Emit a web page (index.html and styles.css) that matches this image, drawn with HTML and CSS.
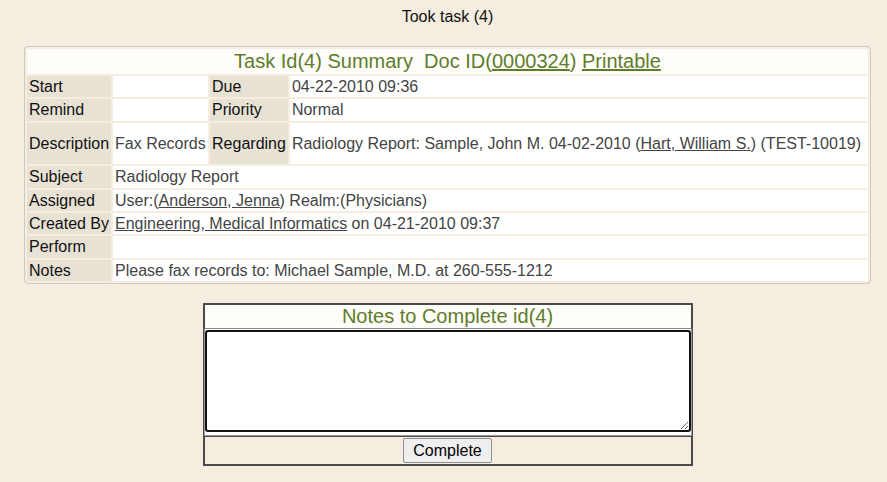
FILE: index.html
```html
<!DOCTYPE html>
<html lang="en">
<head>
    <meta charset="UTF-8">
    <title>Took task (4)</title>
    <link rel="stylesheet" href="styles.css">
</head>
<body>
    <div class="page-title">Took task (4)</div>

    <table class="summary">
        <colgroup>
            <col class="col-label">
            <col class="col-short">
            <col class="col-label2">
            <col>
        </colgroup>
        <tr>
            <th colspan="4" class="summary-head">Task Id(4) Summary &nbsp;Doc ID(<a href="#">0000324</a>) <a href="#">Printable</a></th>
        </tr>
        <tr>
            <td class="label">Start</td>
            <td class="value"></td>
            <td class="label">Due</td>
            <td class="value">04-22-2010 09:36</td>
        </tr>
        <tr>
            <td class="label">Remind</td>
            <td class="value"></td>
            <td class="label">Priority</td>
            <td class="value">Normal</td>
        </tr>
        <tr class="tall">
            <td class="label">Description</td>
            <td class="value">Fax Records</td>
            <td class="label">Regarding</td>
            <td class="value">Radiology Report: Sample, John M. 04-02-2010 (<a href="#">Hart, William S.</a>) (TEST-10019)</td>
        </tr>
        <tr>
            <td class="label">Subject</td>
            <td class="value" colspan="3">Radiology Report</td>
        </tr>
        <tr>
            <td class="label">Assigned</td>
            <td class="value" colspan="3">User:(<a href="#">Anderson, Jenna</a>) Realm:(Physicians)</td>
        </tr>
        <tr>
            <td class="label">Created By</td>
            <td class="value" colspan="3"><a href="#">Engineering, Medical Informatics</a> on 04-21-2010 09:37</td>
        </tr>
        <tr>
            <td class="label">Perform</td>
            <td class="value" colspan="3"></td>
        </tr>
        <tr>
            <td class="label">Notes</td>
            <td class="value" colspan="3">Please fax records to: Michael Sample, M.D. at 260-555-1212</td>
        </tr>
    </table>

    <div class="complete-box">
        <div class="complete-head">Notes to Complete id(4)</div>
        <div class="complete-body">
            <textarea id="notes"></textarea>
        </div>
        <div class="complete-foot">
            <button id="complete-btn">Complete</button>
        </div>
    </div>
</body>
</html>
```

FILE: styles.css
```css
/* page */
body {
    font-family: "Liberation Sans", Arial, sans-serif;
    font-size: 16px;
    background-color: #f4ede0;
    margin: 8px 0 0 8px;
    color: #111;
}

.page-title {
    text-align: center;
    margin-bottom: 20px;
}

/* task summary table */
.summary {
    width: 847px;
    margin: 0 auto;
    border: 1px solid #cdcac4;
    border-radius: 4px;
    border-spacing: 2px;
}

.col-label {
    width: 83px;
}

.col-short {
    width: 95px;
}

.col-label2 {
    width: 77px;
}

.summary td {
    padding: 1px 2px;
    line-height: 19.4px;
    white-space: nowrap;
}

.summary-head {
    background-color: #fffdfa;
    color: #5e7d2c;
    font-size: 20px;
    font-weight: normal;
    line-height: 23px;
    padding: 1px;
}

.summary-head a {
    color: #5e7d2c;
}

.label {
    background-color: #e8e2d5;
    color: #111;
}

.value {
    background-color: #fff;
    color: #444;
}

.value a {
    color: #444;
}

.summary .tall td {
    padding-top: 11px;
    padding-bottom: 11px;
}

/* notes / complete box */
.complete-box {
    width: 488px;
    margin: 19px auto 0;
    border: 1px solid #4a4a4a;
}

.complete-head {
    border: 1px solid #4a4a4a;
    border-bottom-color: #8a8a8a;
    background-color: #fffdfa;
    color: #5e7d2c;
    font-size: 20px;
    line-height: 23px;
    text-align: center;
}

.complete-body {
    border: 1px solid #9a9a9a;
    border-top: none;
    padding: 1px 0 3px;
    background-color: #fff;
}

.complete-body textarea {
    display: block;
    width: 100%;
    height: 102px;
    box-sizing: border-box;
    border: 2px solid #111;
    border-radius: 3px;
    margin: 0;
    font-family: inherit;
}

.complete-foot {
    border: 1px solid #4a4a4a;
    padding: 1px 0;
    text-align: center;
}

#complete-btn {
    font-family: inherit;
    font-size: 16px;
    height: 25px;
    padding: 0 9px;
    background-color: #efefef;
    border: 1px solid #8f8f8f;
    border-radius: 2px;
    color: #000;
    vertical-align: top;
}
```
